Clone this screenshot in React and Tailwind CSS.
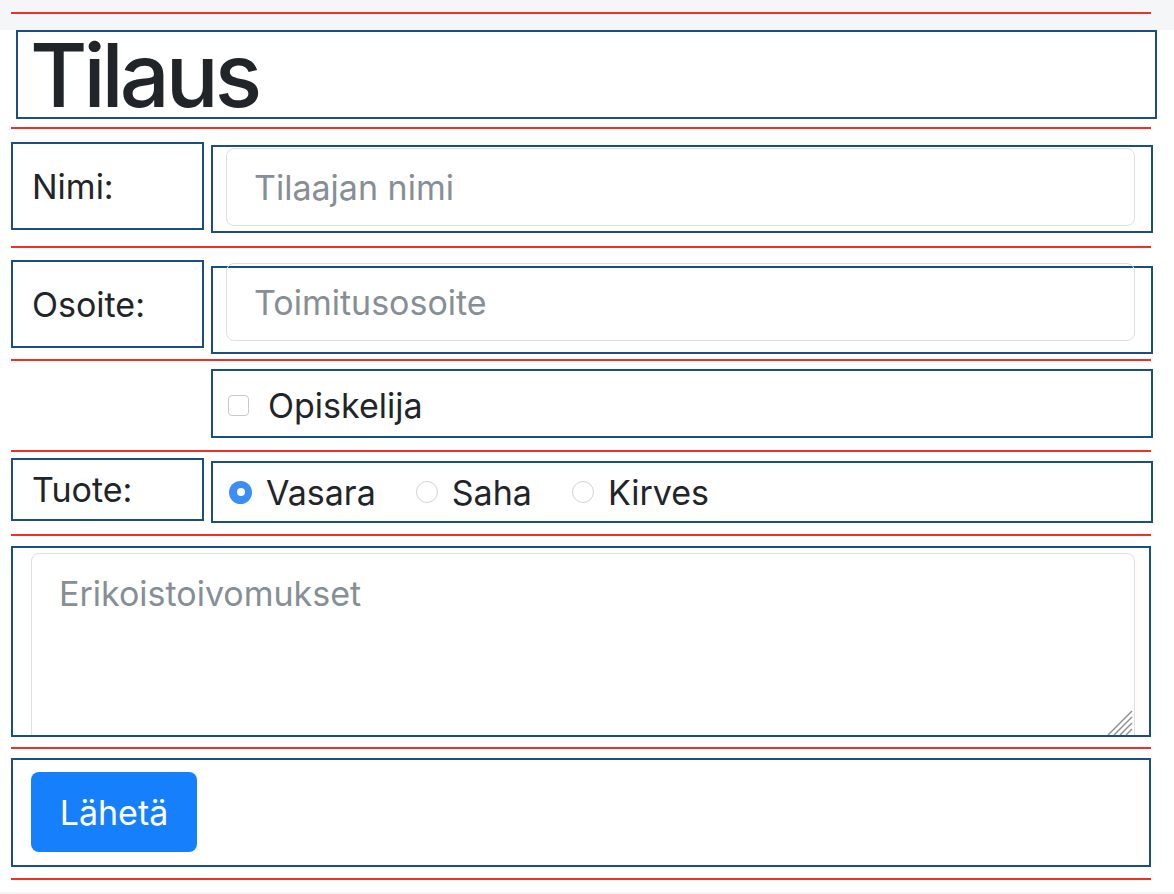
import React from "react";

const RedLine = ({ className = "" }) => (
  <div className={`ml-[11px] h-[2px] w-[1140px] bg-[#ee3124] ${className}`} />
);

const Radio = ({ checked, label }) => (
  <label className="flex items-center gap-[14px]">
    {checked ? (
      <span className="flex h-[23px] w-[23px] items-center justify-center rounded-full bg-[#3a8ef6]">
        <span className="h-[8px] w-[8px] rounded-full bg-white" />
      </span>
    ) : (
      <span className="h-[22px] w-[22px] rounded-full border-[1.5px] border-[#d2d2d2] bg-white" />
    )}
    <span>{label}</span>
  </label>
);

export default function App() {
  return (
    <div className="min-h-screen bg-[#f5f6f8] font-['Inter',sans-serif] text-[34px] text-[#212529]">
      {/* top strip */}
      <div className="h-[23px] pt-[12px]">
        <RedLine />
      </div>

      <form className="h-[862px] bg-white" onSubmit={(e) => e.preventDefault()}>
        {/* title */}
        <div className="ml-[16px] mt-[7px] h-[89px] w-[1141px] border-2 border-[#1b4f80] pl-[12px]">
          <h1 className="text-[88px] font-medium leading-[86px] tracking-[-4px]">Tilaus</h1>
        </div>
        <RedLine className="mt-[8px]" />

        {/* nimi */}
        <div className="mt-[13px] flex items-start">
          <div className="ml-[11px] flex h-[88px] w-[193px] items-center border-2 border-[#1b4f80] pl-[19px]">
            Nimi:
          </div>
          <div className="ml-[7px] mt-[3px] h-[88px] w-[942px] border-2 border-[#1b4f80]">
            <input
              className="ml-[13px] mt-[1px] h-[78px] w-[909px] rounded-[8px] border border-[#dcdfe4] bg-transparent pl-[27px] outline-none placeholder:text-[#868e96]"
              placeholder="Tilaajan nimi"
            />
          </div>
        </div>
        <RedLine className="mt-[13px]" />

        {/* osoite */}
        <div className="mt-[12px] flex items-start">
          <div className="ml-[11px] flex h-[88px] w-[193px] items-center border-2 border-[#1b4f80] pl-[19px]">
            Osoite:
          </div>
          <div className="ml-[7px] mt-[6px] h-[88px] w-[942px] border-2 border-[#1b4f80]">
            <input
              className="ml-[13px] mt-[-5px] h-[78px] w-[909px] rounded-[8px] border border-[#dcdfe4] bg-transparent pl-[27px] outline-none placeholder:text-[#868e96]"
              placeholder="Toimitusosoite"
            />
          </div>
        </div>
        <RedLine className="mt-[5px]" />

        {/* opiskelija */}
        <div className="ml-[211px] mt-[8px] flex h-[69px] w-[942px] items-center gap-[19px] border-2 border-[#1b4f80] pl-[15px] pt-[4px]">
          <span className="h-[21px] w-[21px] rounded-[4px] border-[1.5px] border-[#c9c9c9] bg-white" />
          <span>Opiskelija</span>
        </div>
        <RedLine className="mt-[12px]" />

        {/* tuote */}
        <div className="mt-[6px] flex items-start">
          <div className="ml-[11px] flex h-[63px] w-[193px] items-center border-2 border-[#1b4f80] pl-[19px]">
            Tuote:
          </div>
          <div className="ml-[7px] mt-[3px] flex h-[62px] w-[942px] items-center gap-[40px] border-2 border-[#1b4f80] pl-[16px]">
            <Radio checked label="Vasara" />
            <Radio label="Saha" />
            <Radio label="Kirves" />
          </div>
        </div>
        <RedLine className="mt-[11px]" />

        {/* toivomukset */}
        <div className="relative ml-[11px] mt-[10px] h-[191px] w-[1140px] overflow-hidden border-2 border-[#1b4f80]">
          <textarea
            className="ml-[18px] mt-[5px] block h-[200px] w-[1104px] resize-none rounded-[8px] border border-[#dcdfe4] bg-transparent pl-[27px] pt-[14px] leading-[1.5] outline-none placeholder:text-[#868e96]"
            placeholder="Erikoistoivomukset"
          />
          <svg className="absolute bottom-0 right-[16px]" width="28" height="28" viewBox="0 0 28 28">
            <g stroke="#8f8f8f" strokeWidth="1.4">
              <line x1="27" y1="4" x2="3" y2="28" />
              <line x1="27" y1="10" x2="9" y2="28" />
              <line x1="27" y1="16" x2="15" y2="28" />
              <line x1="27" y1="22" x2="21" y2="28" />
            </g>
          </svg>
        </div>
        <RedLine className="mt-[10px]" />

        {/* laheta */}
        <div className="ml-[11px] mt-[9px] h-[109px] w-[1140px] border-2 border-[#1b4f80]">
          <button
            type="submit"
            className="ml-[18px] mt-[12px] h-[80px] w-[166px] rounded-[8px] bg-[#167ffc] text-white"
          >
            Lähetä
          </button>
        </div>
        <RedLine className="mt-[11px]" />
      </form>
    </div>
  );
}
